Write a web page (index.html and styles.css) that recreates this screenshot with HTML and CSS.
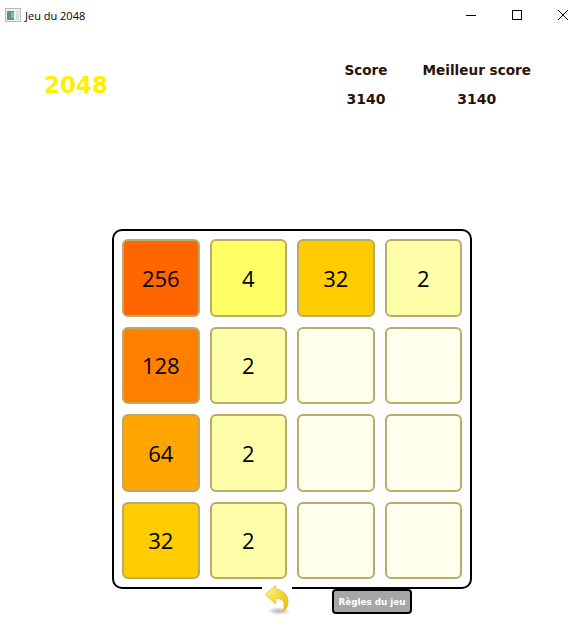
FILE: index.html
```html
<!DOCTYPE html>
<html lang="fr">
<head>
    <meta charset="UTF-8">
    <meta name="viewport" content="width=device-width, initial-scale=1.0">
    <title>Jeu du 2048</title>
    <link rel="stylesheet" href="styles.css">
</head>
<body>
    <div class="titlebar">
        <svg class="app-icon" width="16" height="16" viewBox="0 0 16 16">
            <rect x="0.5" y="1.5" width="15" height="13" fill="#eef1f2" stroke="#b4bcbe"/>
            <rect x="2" y="4" width="7" height="9" fill="#5f8f96"/>
            <rect x="6" y="5" width="3" height="6" fill="#86b89c"/>
            <rect x="11" y="4" width="3" height="9" fill="#d3dfe3"/>
        </svg>
        <span class="window-title">Jeu du 2048</span>
        <div class="window-buttons">
            <svg width="10" height="10" viewBox="0 0 10 10"><path d="M0 5.5H10" stroke="#000" fill="none"/></svg>
            <svg width="10" height="10" viewBox="0 0 10 10"><rect x="0.5" y="0.5" width="9" height="9" stroke="#000" fill="none"/></svg>
            <svg width="10" height="10" viewBox="0 0 10 10"><path d="M0 0L10 10M10 0L0 10" stroke="#000" fill="none"/></svg>
        </div>
    </div>

    <div class="header">
        <div class="logo">2048</div>
        <div class="scores">
            <div class="score-col">
                <div class="score-label">Score</div>
                <div>3140</div>
            </div>
            <div class="score-col">
                <div class="score-label">Meilleur score</div>
                <div>3140</div>
            </div>
        </div>
    </div>

    <div class="board">
        <div class="tile t256">256</div>
        <div class="tile t4">4</div>
        <div class="tile t32">32</div>
        <div class="tile t2">2</div>
        <div class="tile t128">128</div>
        <div class="tile t2">2</div>
        <div class="tile"></div>
        <div class="tile"></div>
        <div class="tile t64">64</div>
        <div class="tile t2">2</div>
        <div class="tile"></div>
        <div class="tile"></div>
        <div class="tile t32">32</div>
        <div class="tile t2">2</div>
        <div class="tile"></div>
        <div class="tile"></div>
    </div>

    <div class="footer">
        <div class="undo">
            <svg width="30" height="30" viewBox="0 0 30 30">
                <defs>
                    <radialGradient id="undo-shadow">
                        <stop offset="0" stop-color="#b0b0b0"/>
                        <stop offset="1" stop-color="#fff"/>
                    </radialGradient>
                    <linearGradient id="undo-fill" x1="0" y1="0" x2="1" y2="1">
                        <stop offset="0" stop-color="#fff6a0"/>
                        <stop offset="0.5" stop-color="#f5d838"/>
                        <stop offset="1" stop-color="#e0b416"/>
                    </linearGradient>
                </defs>
                <ellipse cx="17" cy="26" rx="12" ry="4" fill="url(#undo-shadow)"/>
                <path d="M13.7 0.5L3 9.5L13.7 18.7V13.5C18 13.2 21.5 15 22 18C22.4 21 22 24 20.5 27C24.5 24 26.5 20 26 15.5C25.5 9 20 4.5 13.7 4.3Z" fill="url(#undo-fill)" stroke="#dcb820" stroke-width="0.7"/>
            </svg>
        </div>
        <button class="rules">Règles du jeu</button>
    </div>
</body>
</html>
```

FILE: styles.css
```css
body {
    margin: 0;
    background: white;
    font-family: "DejaVu Sans", sans-serif;
}

.titlebar {
    display: flex;
    align-items: center;
    height: 30px;
    padding-left: 5px;
    font-family: "Open Sans", sans-serif;
    font-size: 11px;
    color: #000;
}

.app-icon {
    margin-right: 4px;
}

.window-title {
    flex: 1;
}

.window-buttons {
    display: flex;
    gap: 36px;
    padding-right: 13px;
}

.header {
    box-sizing: border-box;
    display: flex;
    justify-content: space-between;
    height: 199px;
    padding: 32px 50px 0 44px;
}

.logo {
    margin-top: 6px;
    font-size: 23px;
    line-height: 34px;
    font-weight: bold;
    color: #fff000;
}

.scores {
    display: flex;
    gap: 35px;
    font-size: 14px;
    font-weight: bold;
    color: #2a1208;
}

.score-col {
    display: flex;
    flex-direction: column;
    align-items: center;
    gap: 12px;
    line-height: 17px;
}

.score-label {
    font-size: 13.6px;
}

.board {
    display: grid;
    grid-template-columns: repeat(4, 77.5px);
    grid-auto-rows: 77.5px;
    gap: 10px;
    width: 340px;
    margin-left: 112px;
    padding: 8px;
    border: 2px solid #000;
    border-radius: 10px;
}

.tile {
    box-sizing: border-box;
    display: flex;
    align-items: center;
    justify-content: center;
    border: 2px solid #bcab66;
    border-radius: 6px;
    background: #ffffee;
    font-family: "Open Sans", sans-serif;
    font-size: 22px;
    color: #000;
}

.t2 { background: #ffffaa; }
.t4 { background: #ffff66; }
.t32 { background: #ffcc00; }
.t64 { background: #ffa500; }
.t128 { background: #ff8000; }
.t256 { background: #ff6600; }

.footer {
    display: flex;
    align-items: flex-start;
    margin-top: -4px;
    margin-left: 262px;
}

.undo {
    display: flex;
    background: white;
}

.rules {
    box-sizing: border-box;
    width: 80px;
    height: 25px;
    margin: 4px 0 0 40px;
    padding: 0;
    border: 2px solid #000;
    border-radius: 4px;
    background: #a6a6a6;
    color: white;
    font-family: "DejaVu Sans", sans-serif;
    font-size: 8.8px;
    font-weight: bold;
}
```
